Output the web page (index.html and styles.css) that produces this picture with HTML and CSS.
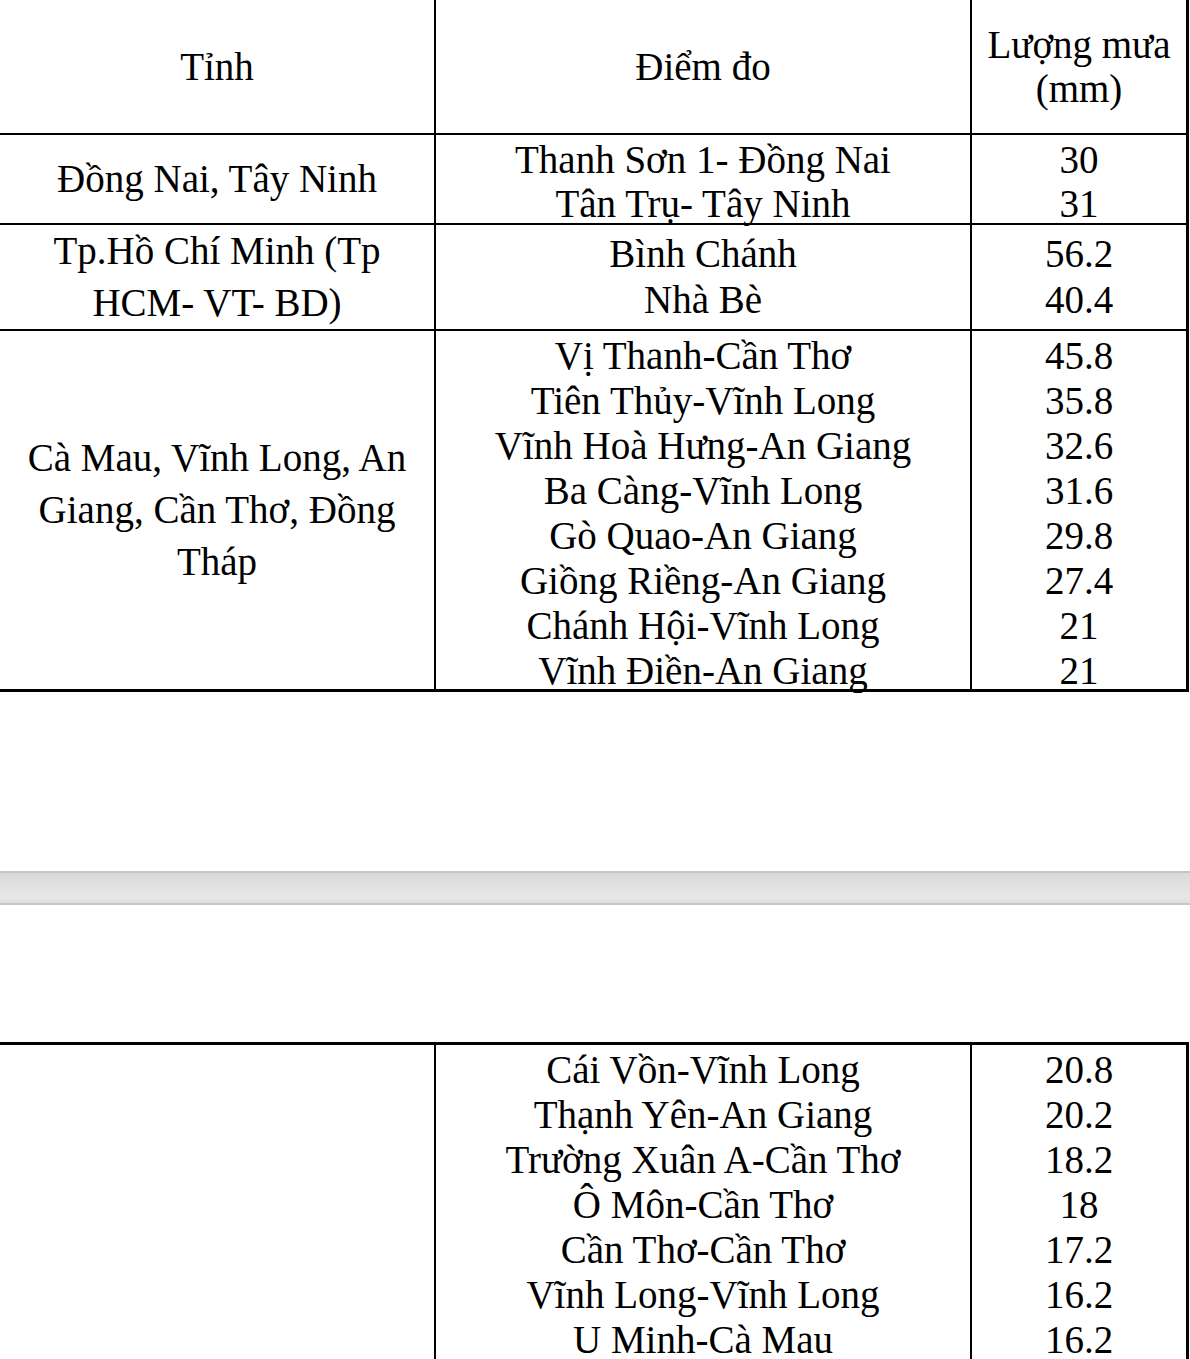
FILE: index.html
```html
<!DOCTYPE html>
<html lang="vi">
<head>
<meta charset="utf-8">
<title>Lượng mưa</title>
<link rel="stylesheet" href="styles.css">
</head>
<body>
<main class="doc">
  <section class="page page-first">
    <table class="rain">
      <colgroup>
        <col class="c-prov">
        <col class="c-site">
        <col class="c-val">
      </colgroup>
      <tr class="r-head">
        <td class="prov">Tỉnh</td>
        <td class="site">Điểm đo</td>
        <td class="val"><div class="lines l44">Lượng mưa<br>(mm)</div></td>
      </tr>
      <tr class="r-dn">
        <td class="prov">Đồng Nai, Tây Ninh</td>
        <td class="site"><div class="lines l44 shift3">Thanh Sơn 1- Đồng Nai<br>Tân Trụ- Tây Ninh</div></td>
        <td class="val"><div class="lines l44 shift3">30<br>31</div></td>
      </tr>
      <tr class="r-hcm">
        <td class="prov">Tp.Hồ Chí Minh (Tp<br>HCM- VT- BD)</td>
        <td class="site"><div class="lines l46">Bình Chánh<br>Nhà Bè</div></td>
        <td class="val"><div class="lines l46">56.2<br>40.4</div></td>
      </tr>
      <tr class="r-mk last">
        <td class="prov">Cà Mau, Vĩnh Long, An<br>Giang, Cần Thơ, Đồng<br>Tháp</td>
        <td class="site"><div class="lines l45 tight">Vị Thanh-Cần Thơ<br>Tiên Thủy-Vĩnh Long<br>Vĩnh Hoà Hưng-An Giang<br>Ba Càng-Vĩnh Long<br>Gò Quao-An Giang<br>Giồng Riềng-An Giang<br>Chánh Hội-Vĩnh Long<br>Vĩnh Điền-An Giang</div></td>
        <td class="val"><div class="lines l45 tight">45.8<br>35.8<br>32.6<br>31.6<br>29.8<br>27.4<br>21<br>21</div></td>
      </tr>
    </table>
  </section>

  <div class="page-break"></div>

  <section class="page page-next">
    <table class="rain cont">
      <colgroup>
        <col class="c-prov">
        <col class="c-site">
        <col class="c-val">
      </colgroup>
      <tr class="r-cont">
        <td class="prov"></td>
        <td class="site"><div class="lines l45">Cái Vồn-Vĩnh Long<br>Thạnh Yên-An Giang<br>Trường Xuân A-Cần Thơ<br>Ô Môn-Cần Thơ<br>Cần Thơ-Cần Thơ<br>Vĩnh Long-Vĩnh Long<br>U Minh-Cà Mau</div></td>
        <td class="val"><div class="lines l45">20.8<br>20.2<br>18.2<br>18<br>17.2<br>16.2<br>16.2</div></td>
      </tr>
    </table>
  </section>
</main>
</body>
</html>
```

FILE: styles.css
```css
html, body {
  margin: 0;
  padding: 0;
  background: #ffffff;
}

.doc {
  height: 1359px;
  overflow: hidden;
  font-family: "Liberation Serif", "Times New Roman", serif;
  font-size: 39px;
  color: #000000;
}

.page-first {
  padding-bottom: 179px;
}

.page-break {
  height: 30px;
  border-top: 2px solid #c5c5c5;
  border-bottom: 2px solid #c8c8c8;
  background: linear-gradient(to bottom, #d9d9d9 0%, #e3e3e3 50%, #e7e7e7 80%, #dedede 100%);
}

.page-next {
  padding-top: 137px;
}

.rain {
  width: 1189px;
  table-layout: fixed;
  border-collapse: separate;
  border-spacing: 0;
}

.c-prov { width: 436px; }
.c-site { width: 536px; }
.c-val  { width: 217px; }

.rain td {
  box-sizing: border-box;
  padding: 0;
  text-align: center;
  vertical-align: middle;
  border-right: 2px solid #000000;
  border-bottom: 2px solid #000000;
  white-space: nowrap;
}

.rain td.val {
  border-right-width: 3px;
}

.rain tr.last td {
  border-bottom-width: 3px;
}

.prov {
  line-height: 52px;
}

.lines.l44 { line-height: 44px; }
.lines.l45 { line-height: 45px; }
.lines.l46 { line-height: 46px; }
.lines.shift3 { margin: 3px 0 -3px; }
.lines.tight { margin: 2px 0 -4px; }

.r-head td { height: 135px; }
.r-head .prov,
.r-head .site { line-height: 45px; }
.r-dn td { height: 90px; }
.r-hcm td { height: 106px; }
.r-mk td { height: 361px; }

.rain.cont td {
  vertical-align: top;
  border-bottom: none;
}

.rain.cont .lines {
  padding-top: 2px;
}

.rain.cont {
  border-top: 3px solid #000000;
}

.r-cont td { height: 315px; }
```
